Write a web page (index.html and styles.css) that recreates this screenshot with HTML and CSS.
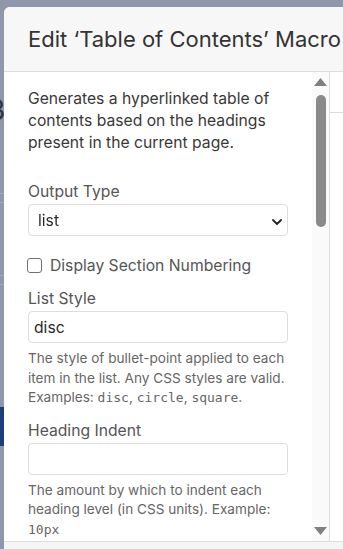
FILE: index.html
```html
<!DOCTYPE html>
<html lang="en">
<head>
  <meta charset="UTF-8">
  <meta name="viewport" content="width=device-width, initial-scale=1.0">
  <title>Edit Macro</title>
  <link rel="stylesheet" href="styles.css">
</head>
<body>

  <!-- Page behind the dialog (only a sliver shows) -->
  <div class="page">
    <div class="page-num">3</div>
    <div class="page-rule"></div>
    <div class="page-rule page-rule-close"></div>
    <div class="page-rule page-rule-far"></div>
    <div class="page-rule page-rule-close"></div>
    <div class="page-tab"></div>
  </div>

  <!-- Macro dialog -->
  <div class="modal">
    <div class="modal-header">
      <h2>Edit ‘Table of Contents’ Macro</h2>
    </div>

    <div class="modal-body">
      <div class="editor">
        <form class="form-pane">
          <p class="macro-desc">Generates a hyperlinked table of contents based on the headings present in the current page.</p>

          <div class="field field-first">
            <label for="output-type">Output Type</label>
            <div class="select-wrap">
              <select id="output-type">
                <option>list</option>
                <option>flat</option>
              </select>
              <svg class="select-arrow" width="10" height="6" viewBox="0 0 10 6">
                <path d="M1 1l4 4 4-4" fill="none" stroke="#222" stroke-width="1.8" stroke-linecap="round" stroke-linejoin="round"/>
              </svg>
            </div>
          </div>

          <label class="check-row">
            <input type="checkbox">
            <span>Display Section Numbering</span>
          </label>

          <div class="field">
            <label for="list-style">List Style</label>
            <input type="text" id="list-style" value="disc">
            <p class="help">The style of bullet-point applied to each item in the list. Any CSS styles are valid. Examples: <code>disc</code>, <code>circle</code>, <code>square</code>.</p>
          </div>

          <div class="field">
            <label for="heading-indent">Heading Indent</label>
            <input type="text" id="heading-indent">
            <p class="help">The amount by which to indent each heading level (in CSS units). Example: <code>10px</code></p>
          </div>
        </form>

        <!-- Scrollbar of the form pane -->
        <div class="scrollbar">
          <div class="sb-button">
            <svg width="13" height="8" viewBox="0 0 13 8"><path d="M6.5 0L13 8H0z" fill="#808080"/></svg>
          </div>
          <div class="sb-thumb"></div>
          <div class="sb-button sb-down">
            <svg width="13" height="8" viewBox="0 0 13 8"><path d="M0 0h13L6.5 8z" fill="#808080"/></svg>
          </div>
        </div>
      </div>

      <div class="preview">
        <div class="preview-head">Preview</div>
      </div>
    </div>

    <div class="modal-footer"></div>
  </div>

</body>
</html>
```

FILE: styles.css
```css
body {
  font-family: 'Inter', 'Noto Sans', sans-serif;
  margin: 0;
  padding: 0;
  height: 100vh;
  overflow: hidden;
  background-color: #8f98ab;
}

/* Page behind the overlay */
.page {
  width: 4px;
  height: 100vh;
  overflow: hidden;
  display: flex;
  flex-direction: column;
}

.page-num {
  margin-top: 96px;
  margin-left: -12px;
  font-size: 28px;
  line-height: 28px;
  color: #2e3544;
}

.page-rule {
  margin-top: 69px;
  height: 1px;
  flex-shrink: 0;
  background-color: #a3a9b7;
}

.page-rule-close {
  margin-top: 8px;
}

.page-rule-far {
  margin-top: 72px;
}

.page-tab {
  margin-top: 122px;
  height: 39px;
  flex-shrink: 0;
  background-color: #1d3d7b;
}

/* Dialog */
.modal {
  position: fixed;
  top: 7px;
  left: 4px;
  width: 420px;
  height: 570px;
  background-color: #fff;
  border-radius: 6px;
  overflow: hidden;
  display: flex;
  flex-direction: column;
}

.modal-header {
  height: 64px;
  flex-shrink: 0;
  padding: 0 24px;
  display: flex;
  align-items: center;
  background-color: #f7f7f7;
  border-bottom: 1px solid #dddddd;
}

.modal-header h2 {
  margin: 0;
  font-size: 22px;
  font-weight: 400;
  color: #333;
  white-space: nowrap;
}

.modal-body {
  height: 469px;
  flex-shrink: 0;
  display: flex;
}

.editor {
  width: 325px;
  display: flex;
  border-right: 1px solid #dddddd;
}

.form-pane {
  width: 308px;
  box-sizing: border-box;
  padding: 16px 24px 0;
  overflow: hidden;
}

.macro-desc {
  margin: 0;
  font-size: 15.7px;
  line-height: 22px;
  color: #383838;
}

.field {
  margin-top: 12px;
}

.field-first {
  margin-top: 27px;
}

.field label {
  display: block;
  font-size: 15.7px;
  line-height: 22px;
  color: #555;
}

.field input[type="text"],
.field select {
  display: block;
  width: 100%;
  height: 32px;
  box-sizing: border-box;
  margin: 1px 0 0;
  border: 1px solid #dddddd;
  border-radius: 4px;
  background-color: #fff;
  font-family: inherit;
  font-size: 15.7px;
  color: #2a2a2a;
  outline: none;
}

.field input[type="text"] {
  padding: 0 5px;
}

.select-wrap {
  position: relative;
}

.field select {
  padding: 0 9px;
  appearance: none;
  -webkit-appearance: none;
}

.select-arrow {
  position: absolute;
  right: 6px;
  top: 15px;
  pointer-events: none;
}

.check-row {
  margin-top: 18px;
  height: 22px;
  display: flex;
  align-items: center;
  gap: 8px;
  font-size: 15.7px;
  color: #555;
}

.check-row input {
  appearance: none;
  -webkit-appearance: none;
  width: 15px;
  height: 15px;
  margin: 0 0 0 -1px;
  border: 1px solid #707070;
  border-radius: 3px;
  background-color: #fff;
}

.help {
  margin: 6px 0 0;
  font-size: 13.6px;
  line-height: 19.6px;
  color: #666;
}

.help code {
  font-family: 'DejaVu Sans Mono', 'Liberation Mono', monospace;
  font-size: 13px;
  line-height: 19.6px;
  color: #666;
}

/* Fake scrollbar of the form pane */
.scrollbar {
  width: 17px;
  display: flex;
  flex-direction: column;
  align-items: center;
  background-color: #fafafa;
}

.sb-button {
  height: 20px;
  display: flex;
  align-items: center;
  justify-content: center;
}

.sb-thumb {
  margin-top: 3px;
  width: 10px;
  height: 132px;
  border-radius: 5px;
  background-color: #8a8a8a;
}

.sb-down {
  margin-top: auto;
}

.preview {
  flex: 1;
}

.preview-head {
  height: 40px;
  padding-left: 12px;
  display: flex;
  align-items: center;
  font-size: 13px;
  color: #777;
  border-bottom: 1px solid #dddddd;
}

.modal-footer {
  flex: 1;
  border-top: 1px solid #dddddd;
  background-color: #f5f5f5;
}
```
